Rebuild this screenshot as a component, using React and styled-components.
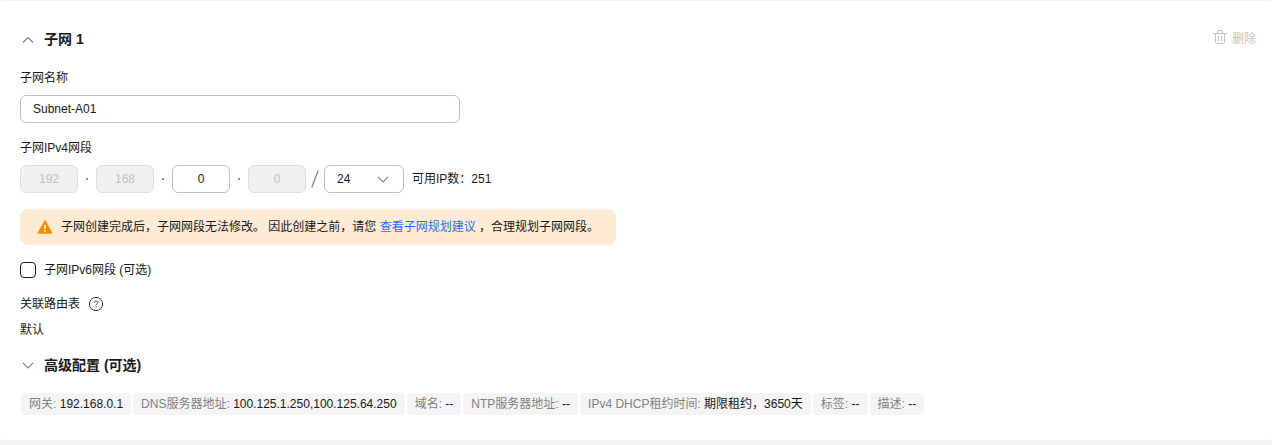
import React, { useState } from "react";
import styled, { createGlobalStyle } from "styled-components";

const GlobalStyle = createGlobalStyle`
  * {
    box-sizing: border-box;
  }
  body {
    margin: 0;
    background: #f4f4f4;
    color: #191919;
    font-family: "Liberation Sans", "Noto Sans CJK SC", sans-serif;
    font-size: 12px;
    line-height: 18px;
  }
  input, button {
    font-family: inherit;
    font-size: inherit;
    color: inherit;
  }
`;

const Page = styled.div`
  height: 445px;
  padding-top: 1px;
  overflow: hidden;
`;

const Card = styled.section`
  height: 439px;
  padding: 28px 16px 0 20px;
  background: #fff;
  border-radius: 4px;
`;

const Header = styled.div`
  display: flex;
  align-items: center;
  justify-content: space-between;
  height: 20px;
`;

const Title = styled.h3`
  display: flex;
  align-items: center;
  gap: 8px;
  height: 20px;
  margin: 0;
  font-size: 14px;
  font-weight: 700;
  line-height: 20px;
`;

const DeleteButton = styled.button`
  display: flex;
  align-items: center;
  gap: 5px;
  padding: 0;
  border: none;
  background: none;
  color: #c2c2c2;
  line-height: 18px;
`;

const Label = styled.div`
  display: flex;
  align-items: center;
  gap: 8px;
  height: 18px;
  margin-top: ${(props) => props.$top}px;
`;

const Input = styled.input`
  display: block;
  width: ${(props) => props.$width}px;
  height: 28px;
  padding: 0 12px;
  border: 1px solid #c2c2c2;
  border-radius: 6px;
  background: #fff;
  outline: none;
  text-align: ${(props) => props.$align || "left"};
  &:disabled {
    border-color: #dfdfdf;
    background: #f0f0f0;
    color: #c2c2c2;
  }
`;

const NameInput = styled(Input)`
  margin-top: 8px;
`;

const IpRow = styled.div`
  display: flex;
  align-items: center;
  height: 28px;
  margin-top: 8px;
`;

const Dot = styled.span`
  width: 2px;
  height: 2px;
  margin: 0 8px;
  background: #8f8f8f;
`;

const Slash = styled.svg`
  width: 8px;
  height: 18px;
  margin: 0 5px;
`;

const Select = styled.button`
  display: flex;
  align-items: center;
  justify-content: space-between;
  width: 80px;
  height: 28px;
  margin-right: 8px;
  padding: 0 12px;
  border: 1px solid #c2c2c2;
  border-radius: 6px;
  background: #fff;
`;

const Alert = styled.div`
  display: flex;
  align-items: center;
  gap: 8px;
  width: 596px;
  height: 36px;
  margin-top: 16px;
  padding: 0 17px;
  border-radius: 8px;
  background: #ffebd3;
  white-space: pre;
`;

const AlertLink = styled.a`
  color: #1f6fff;
  text-decoration: none;
`;

const CheckRow = styled.label`
  display: flex;
  align-items: center;
  gap: 8px;
  height: 18px;
  margin-top: 16px;
`;

const Checkbox = styled.input`
  appearance: none;
  width: 16px;
  height: 16px;
  margin: 0;
  border: 1px solid #191919;
  border-radius: 4px;
  background: #fff;
`;

const Value = styled.div`
  height: 18px;
  margin-top: 8px;
`;

const AdvancedTitle = styled(Title)`
  margin-top: 16px;
`;

const Tags = styled.div`
  display: flex;
  gap: 2px;
  margin: 18px 0 0 1px;
`;

const Tag = styled.div`
  height: 22px;
  padding: 0 8px;
  border-radius: 4px;
  background: #f4f4f4;
  line-height: 22px;
  white-space: nowrap;
`;

const TagName = styled.span`
  color: #808080;
`;

const Chevron = ({ up }) => (
  <svg width="16" height="16" viewBox="0 0 16 16" fill="none" stroke="#808080" strokeWidth="1.2">
    <path d={up ? "M3 11.5L8 6.5L13 11.5" : "M3 5.8L8 10.8L13 5.8"} />
  </svg>
);

const TrashIcon = () => (
  <svg width="14" height="18" viewBox="0 0 14 18" fill="none" stroke="#c2c2c2">
    <path d="M0.5 3.5H13.5M4.5 3.5V2Q4.5 0.5 6 0.5H8Q9.5 0.5 9.5 2V3.5M2.5 3.5V12.5Q2.5 13.5 3.5 13.5H10.5Q11.5 13.5 11.5 12.5V3.5M5.5 6V11M8.5 6V11" />
  </svg>
);

const WarningIcon = () => (
  <svg width="16" height="16" viewBox="0 0 16 16">
    <path
      d="M7.1 2Q8 0.5 8.9 2L15 13.2Q15.5 14.8 14.2 14.8H1.8Q0.5 14.8 1 13.2Z"
      fill="#ff8800"
    />
    <path d="M8 5.8V10" stroke="#fff" strokeWidth="1.6" />
    <circle cx="8" cy="12" r="0.9" fill="#fff" />
  </svg>
);

const HelpIcon = () => (
  <svg width="16" height="16" viewBox="0 0 16 16" fill="none" stroke="#333" strokeWidth="1">
    <circle cx="8" cy="8" r="6.6" />
    <path d="M6.2 6.7C6.2 5.6 7 5.1 8 5.1S9.8 5.7 9.8 6.6C9.8 7.9 8 7.8 8 9.2" />
    <path d="M8 10.1V11.2" />
  </svg>
);

const tags = [
  { name: "网关", value: "192.168.0.1" },
  { name: "DNS服务器地址", value: "100.125.1.250,100.125.64.250" },
  { name: "域名", value: "--" },
  { name: "NTP服务器地址", value: "--" },
  { name: "IPv4 DHCP租约时间", value: "期限租约，3650天" },
  { name: "标签", value: "--" },
  { name: "描述", value: "--" },
];

const App = () => {
  const [name, setName] = useState("Subnet-A01");
  const [segment, setSegment] = useState("0");
  const [ipv6, setIpv6] = useState(false);

  return (
    <Page>
      <GlobalStyle />
      <Card>
        <Header>
          <Title>
            <Chevron up />
            子网 1
          </Title>
          <DeleteButton disabled>
            <TrashIcon />
            删除
          </DeleteButton>
        </Header>

        <Label $top={20}>子网名称</Label>
        <NameInput $width={440} value={name} onChange={(e) => setName(e.target.value)} />

        <Label $top={16}>子网IPv4网段</Label>
        <IpRow>
          <Input $width={58} $align="center" value="192" disabled />
          <Dot />
          <Input $width={58} $align="center" value="168" disabled />
          <Dot />
          <Input
            $width={58}
            $align="center"
            value={segment}
            onChange={(e) => setSegment(e.target.value)}
          />
          <Dot />
          <Input $width={58} $align="center" value="0" disabled />
          <Slash viewBox="0 0 8 18">
            <path d="M7.2 0.5L0.8 17.5" stroke="#808080" strokeWidth="1.2" />
          </Slash>
          <Select>
            24
            <Chevron />
          </Select>
          <span>可用IP数：251</span>
        </IpRow>

        <Alert>
          <WarningIcon />
          <span>
            子网创建完成后，子网网段无法修改。 因此创建之前，请您{" "}
            <AlertLink>查看子网规划建议</AlertLink> ，合理规划子网网段。
          </span>
        </Alert>

        <CheckRow>
          <Checkbox type="checkbox" checked={ipv6} onChange={() => setIpv6(!ipv6)} />
          子网IPv6网段 (可选)
        </CheckRow>

        <Label $top={16}>
          关联路由表
          <HelpIcon />
        </Label>
        <Value>默认</Value>

        <AdvancedTitle>
          <Chevron />
          高级配置 (可选)
        </AdvancedTitle>
        <Tags>
          {tags.map((tag) => (
            <Tag key={tag.name}>
              <TagName>{tag.name}:</TagName> {tag.value}
            </Tag>
          ))}
        </Tags>
      </Card>
    </Page>
  );
};

export default App;
